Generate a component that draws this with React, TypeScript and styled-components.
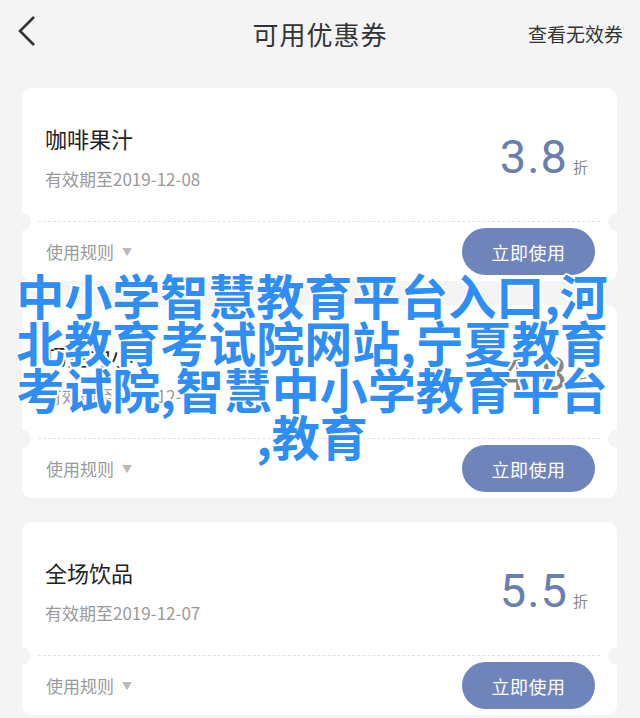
import React from 'react';
import styled, { createGlobalStyle } from 'styled-components';

const GlobalStyle = createGlobalStyle`
  body {
    margin: 0;
    background: #f4f4f4;
    font-family: "Noto Sans CJK SC", "Noto Sans", sans-serif;
  }
`;

const Page = styled.div`
  position: relative;
  width: 640px;
  height: 718px;
  overflow: hidden;
  background: #f4f4f4;
`;

const Header = styled.div`
  height: 66px;
  display: grid;
  grid-template-columns: 120px 1fr 120px;
  align-items: center;
  padding: 0 17px 0 17px;
  box-sizing: border-box;
`;

const Back = styled.svg`
  width: 24px;
  height: 36px;
  display: block;
`;

const Title = styled.div`
  text-align: center;
  font-size: 26px;
  color: #333;
  letter-spacing: 1px;
`;

const Invalid = styled.div`
  text-align: right;
  font-size: 19px;
  color: #333;
`;

const List = styled.div`
  display: flex;
  flex-direction: column;
  gap: 24px;
  padding: 22px 23px 0 22px;
`;

const Card = styled.div`
  height: 193px;
  background: #fff;
  border-radius: 10px;
  display: flex;
  flex-direction: column;
`;

const CardTop = styled.div`
  height: 133px;
  display: flex;
  justify-content: space-between;
  align-items: flex-start;
  padding: 36px 29px 0 23px;
  box-sizing: border-box;
`;

const Info = styled.div`
  display: flex;
  flex-direction: column;
  gap: 16px;
`;

const Name = styled.div`
  font-size: 22px;
  line-height: 28px;
  color: #222;
`;

const Expire = styled.div`
  font-size: 17px;
  line-height: 22px;
  color: #9a9a9a;
`;

const Value = styled.div`
  display: flex;
  align-items: baseline;
  gap: 5px;
  margin-top: 6px;
`;

const Num = styled.span<{ $muted?: boolean }>`
  font-family: Roboto, "Liberation Sans", sans-serif;
  font-size: 47px;
  line-height: 54px;
  letter-spacing: 1px;
  color: ${p => (p.$muted ? '#858585' : '#6b7fae')};
`;

const Unit = styled.span`
  font-size: 15px;
  color: #888;
`;

const Divider = styled.div`
  position: relative;
  height: 0;
  margin: 0 17px 0 16px;
  border-top: 1px dashed #e2e2e2;

  &::before,
  &::after {
    content: '';
    position: absolute;
    top: -9px;
    width: 18px;
    height: 18px;
    border-radius: 50%;
    background: #f4f4f4;
  }
  &::before { left: -25px; }
  &::after { right: -26px; }
`;

const CardBottom = styled.div`
  flex: 1;
  display: flex;
  align-items: center;
  justify-content: space-between;
  padding: 0 22px 0 24px;
`;

const Rule = styled.div`
  display: flex;
  align-items: center;
  gap: 8px;
  font-size: 17px;
  color: #9a9a9a;
`;

const Caret = styled.span`
  font-size: 10px;
  color: #bbb;
`;

const UseButton = styled.button`
  width: 133px;
  height: 47px;
  border: none;
  border-radius: 24px;
  background: #6f84ba;
  color: #fff;
  font-family: "Noto Sans CJK SC", sans-serif;
  font-size: 18px;
  letter-spacing: 0.5px;
  padding: 0;
`;

const Overlay = styled.div`
  position: absolute;
  top: 271px;
  left: 15px;
  width: 594px;
  text-align: center;
  line-break: anywhere;
  font-family: "Noto Sans CJK SC", sans-serif;
  font-weight: 700;
  font-size: 48px;
  line-height: 47px;
  color: #2f8ef5;
  text-shadow:
    2px 0 0 #fff, -2px 0 0 #fff, 0 2px 0 #fff, 0 -2px 0 #fff,
    1.5px 1.5px 0 #fff, -1.5px 1.5px 0 #fff, 1.5px -1.5px 0 #fff, -1.5px -1.5px 0 #fff;
`;

const coupons = [
  { name: '咖啡果汁', date: '2019-12-08', value: '3.8', muted: false },
  { name: '巧克力小食', date: '2019-12-08', value: '4.8', muted: true },
  { name: '全场饮品', date: '2019-12-07', value: '5.5', muted: false },
];

const App: React.FC = () => {
  return (
    <>
      <GlobalStyle />
      <Page>
        <Header>
          <Back viewBox="0 0 24 36">
            <polyline points="17,2 3,16 17,30" fill="none" stroke="#333" strokeWidth="2.6" />
          </Back>
          <Title>可用优惠券</Title>
          <Invalid>查看无效券</Invalid>
        </Header>
        <List>
          {coupons.map(item => (
            <Card key={item.name}>
              <CardTop>
                <Info>
                  <Name>{item.name}</Name>
                  <Expire>有效期至{item.date}</Expire>
                </Info>
                <Value>
                  <Num $muted={item.muted}>{item.value}</Num>
                  <Unit>折</Unit>
                </Value>
              </CardTop>
              <Divider />
              <CardBottom>
                <Rule>
                  使用规则<Caret>▼</Caret>
                </Rule>
                <UseButton>立即使用</UseButton>
              </CardBottom>
            </Card>
          ))}
        </List>
        <Overlay>中小学智慧教育平台入口,河北教育考试院网站,宁夏教育考试院,智慧中小学教育平台,教育</Overlay>
      </Page>
    </>
  );
};

export default App;
